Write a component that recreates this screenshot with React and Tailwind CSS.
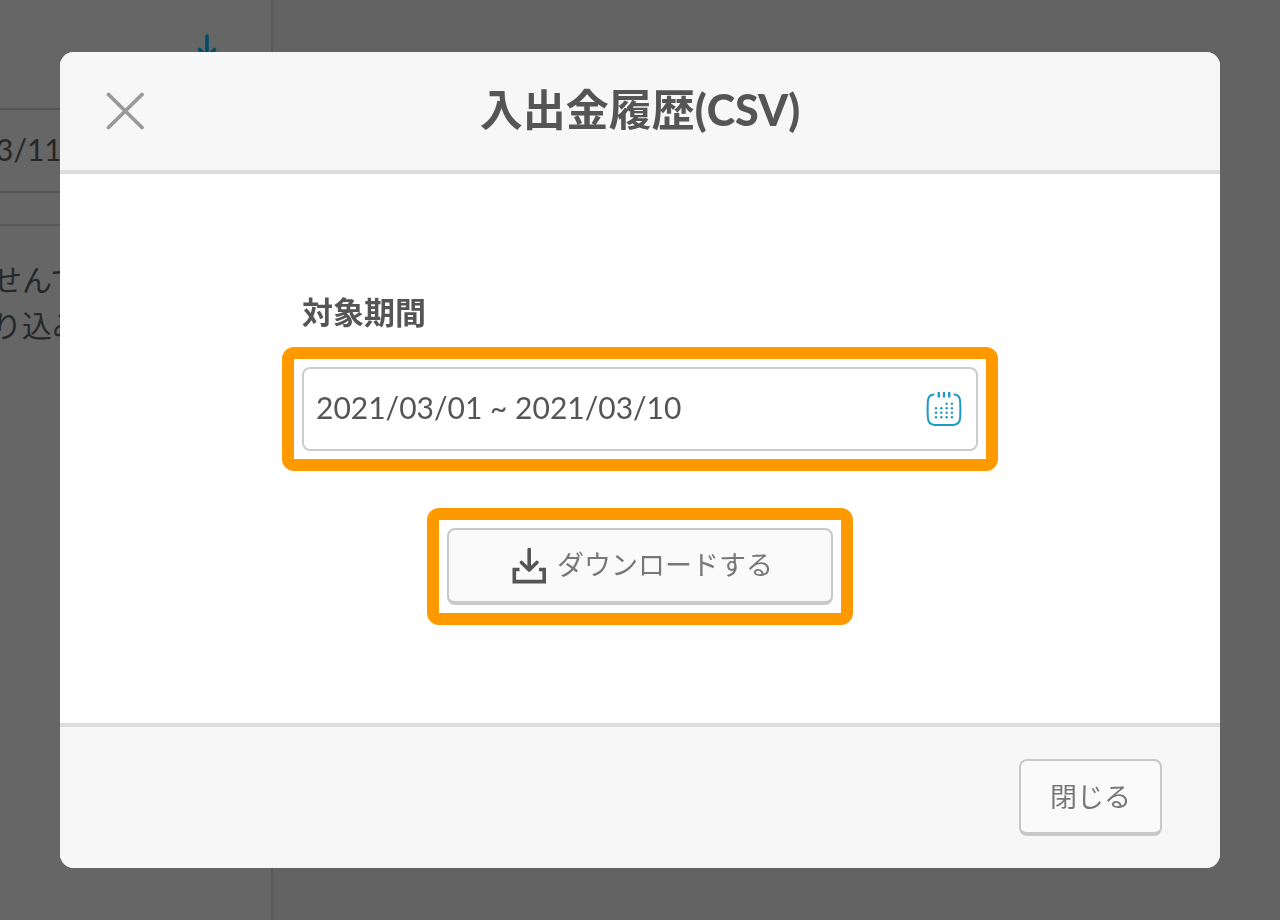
import React, { useState } from 'react';

const CloseIcon = () => (
  <svg className="w-10 h-10" viewBox="0 0 40 40" fill="none" stroke="currentColor" strokeWidth="3.8" strokeLinecap="round">
    <path d="M2.500 3.500L36 36.500M36 3.500L2.500 36.500" />
  </svg>
);

const CalendarIcon = () => (
  <svg className="w-9 h-9" viewBox="0 0 36 36" fill="none" stroke="currentColor" strokeWidth="2" strokeLinecap="round">
    <path d="M7.500 3.600C3.500 4.100 2 6.200 1.800 10.500C1.500 16 1.500 21 1.800 26.500C2 31.500 4 33.800 9 34H27C32 33.800 34 31.500 34.200 26.500C34.500 21 34.500 16 34.200 10.500C34 6.200 32.500 4.100 28.500 3.600" />
    <path d="M12.800 2V5.500M18 2V5.500M23.200 2V5.500" strokeWidth="2.400" />
    {[12.8, 17.3, 21.8, 26.3].map((y, row) =>
      [10, 15.3, 20.6, 25.900].map((x, col) =>
        row === 0 && col < 2 ? null : (
          <circle key={`${row}-${col}`} cx={x} cy={y} r="1.2" fill="currentColor" stroke="none" />
        )
      )
    )}
  </svg>
);

const DownloadIcon = () => (
  <svg className="w-9 h-9" viewBox="0 0 36 36" fill="none" stroke="currentColor" strokeWidth="3.6">
    <path d="M8.500 21.500H3.300V33.600H33.200V21.500H28" strokeLinejoin="miter" />
    <path d="M18.200 1.500V21M10.500 14.500L18.200 22L25.900 14.500" strokeLinecap="round" strokeLinejoin="round" />
  </svg>
);

const ArrowDownIcon = () => (
  <svg className="w-6 h-8" viewBox="0 0 24 32" fill="none" stroke="currentColor" strokeWidth="3.600" strokeLinecap="round" strokeLinejoin="round">
    <path d="M12 2V23M4.500 15.500L12 23L19.500 15.500" />
  </svg>
);

// Orange frame that points out the controls of the current step
const Highlight = ({ children }) => (
  <div className="border-12 border-[#ff9900] rounded-xl bg-[#ff9900]">
    <div className="p-2 bg-white">{children}</div>
  </div>
);

const HistoryPage = () => (
  <main className="flex min-h-screen bg-[#636363]" aria-hidden="true">
    <div className="w-[273px] shrink-0 overflow-hidden bg-[#666666] border-r-2 border-[#595959] text-3xl text-[#252828]">
      <div className="flex justify-end h-27 pt-[34px] pr-[52px] text-[#004e68]">
        <ArrowDownIcon />
      </div>
      <div className="flex items-center h-[85px] pb-1 border-y-2 border-[#555555]">
        <span className="-ml-1">3/11</span>
      </div>
      <div className="mt-[31px] pt-[30px] border-t-2 border-[#595959]">
        <p className="-ml-2 leading-[46px]">
          せんで
          <br />
          り込み
        </p>
      </div>
    </div>
  </main>
);

const CsvDialog = () => {
  const [period, setPeriod] = useState('2021/03/01 ~ 2021/03/10');

  return (
    <div className="fixed inset-0 flex px-15 py-[52px]">
      <div
        role="dialog"
        aria-labelledby="dialog-title"
        className="flex flex-col flex-1 overflow-hidden rounded-[14px] bg-white"
      >
        {/* Header */}
        <header className="flex items-center h-[122px] shrink-0 px-[46px] bg-[#f7f7f7] border-b-4 border-[#dddddd]">
          <button type="button" aria-label="閉じる" className="text-[#999999]">
            <CloseIcon />
          </button>
          <h1 id="dialog-title" className="flex-1 mr-10 pb-1 text-center text-[43px] leading-none font-bold">
            入出金履歴<span className="font-['Lato_Black',Lato,sans-serif] font-black">(CSV)</span>
          </h1>
        </header>

        {/* Body */}
        <div className="flex flex-col flex-1 items-center pt-[120px]">
          <div className="w-[716px] max-w-full">
            <label htmlFor="period" className="block ml-5 mb-[17px] text-[31px] leading-9 font-bold">
              対象期間
            </label>
            <Highlight>
              <div className="flex items-center h-[84px] pl-3 pr-[14px] border-2 border-[#cccccc] rounded-lg">
                <input
                  id="period"
                  type="text"
                  value={period}
                  onChange={(e) => setPeriod(e.target.value)}
                  className="flex-1 min-w-0 pb-1 text-3xl outline-none"
                />
                <button type="button" aria-label="カレンダー" className="text-[#1e9bc4]">
                  <CalendarIcon />
                </button>
              </div>
            </Highlight>
          </div>

          <div className="mt-[37px]">
            <Highlight>
              <button
                type="button"
                className="flex items-center justify-center gap-2.5 w-[386px] h-[77px] pl-1 bg-[#fafafa] border-2 border-b-4 border-[#c8c8c8] rounded-lg text-[27px]"
              >
                <DownloadIcon />
                <span className="text-[#777777]">ダウンロードする</span>
              </button>
            </Highlight>
          </div>
        </div>

        {/* Footer */}
        <footer className="flex items-center justify-end h-[145px] shrink-0 px-[58px] bg-[#f7f7f7] border-t-4 border-[#dddddd]">
          <button
            type="button"
            className="w-[143px] h-[77px] pt-0.5 bg-[#fafafa] border-2 border-b-4 border-[#c8c8c8] rounded-lg text-[27px] text-[#777777]"
          >
            閉じる
          </button>
        </footer>
      </div>
    </div>
  );
};

const App = () => (
  <div className="font-[Lato,'Noto_Sans_CJK_JP',sans-serif] text-[#555555]" lang="ja">
    <HistoryPage />
    <CsvDialog />
  </div>
);

export default App;
